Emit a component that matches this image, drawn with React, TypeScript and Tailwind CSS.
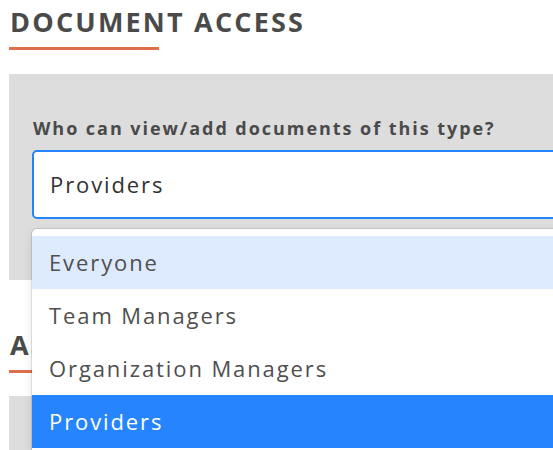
import React, { useState } from 'react';

const OPTIONS = ['Everyone', 'Team Managers', 'Organization Managers', 'Providers'];

function App() {
  const [selected] = useState('Providers');
  const [hovered] = useState('Everyone');

  return (
    <div className="min-h-screen bg-white pl-[9px] font-['Open_Sans',sans-serif] overflow-hidden">
      <div className="pt-[5px]">
        <h2 className="text-[27px] leading-[34px] font-bold text-[#4a4a4a] pl-[1px] tracking-[2.2px]">
          DOCUMENT ACCESS
        </h2>
        <div className="mt-[8px] h-[3px] w-[150px] bg-[#df6f4b]" />
      </div>

      <div className="mt-[24px] bg-[#dddddd] px-[23px] pt-[42px] pb-[61px]">
        <label className="block text-[18px] leading-[24px] font-bold text-[#4a4a4a] pl-[1px] tracking-[1.95px]">
          Who can view/add documents of this type?
        </label>
        <div className="relative mt-[10px] w-[560px]">
          <div className="h-[69px] rounded-[5px] border-2 border-[#2684ff] bg-white flex items-center px-[16px]">
            <span className="text-[22px] text-[#333333] tracking-[1.9px]">{selected}</span>
          </div>
          <div className="absolute left-0 right-0 top-[79px] z-10 rounded-[5px] bg-white py-[7px] shadow-[0_0_0_1px_rgba(0,0,0,0.1),0_4px_11px_rgba(0,0,0,0.1)]">
            {OPTIONS.map((opt) => (
              <div
                key={opt}
                className={`h-[53px] flex items-center px-[17px] text-[22px] tracking-[1.9px] ${
                  opt === selected
                    ? 'bg-[#2684ff] text-white'
                    : opt === hovered
                    ? 'bg-[#deebff] text-[#4f4f4f]'
                    : 'text-[#4f4f4f]'
                }`}
              >
                {opt}
              </div>
            ))}
          </div>
        </div>
      </div>

      <div className="pt-[48px]">
        <h2 className="text-[27px] leading-[34px] font-bold text-[#4a4a4a] pl-[1px] tracking-[2.2px]">
          ASSIGNMENT
        </h2>
        <div className="mt-[8px] h-[3px] w-[150px] bg-[#df6f4b]" />
      </div>
      <div className="mt-[23px] h-[120px] bg-[#dddddd]" />
    </div>
  );
}

export default App;
